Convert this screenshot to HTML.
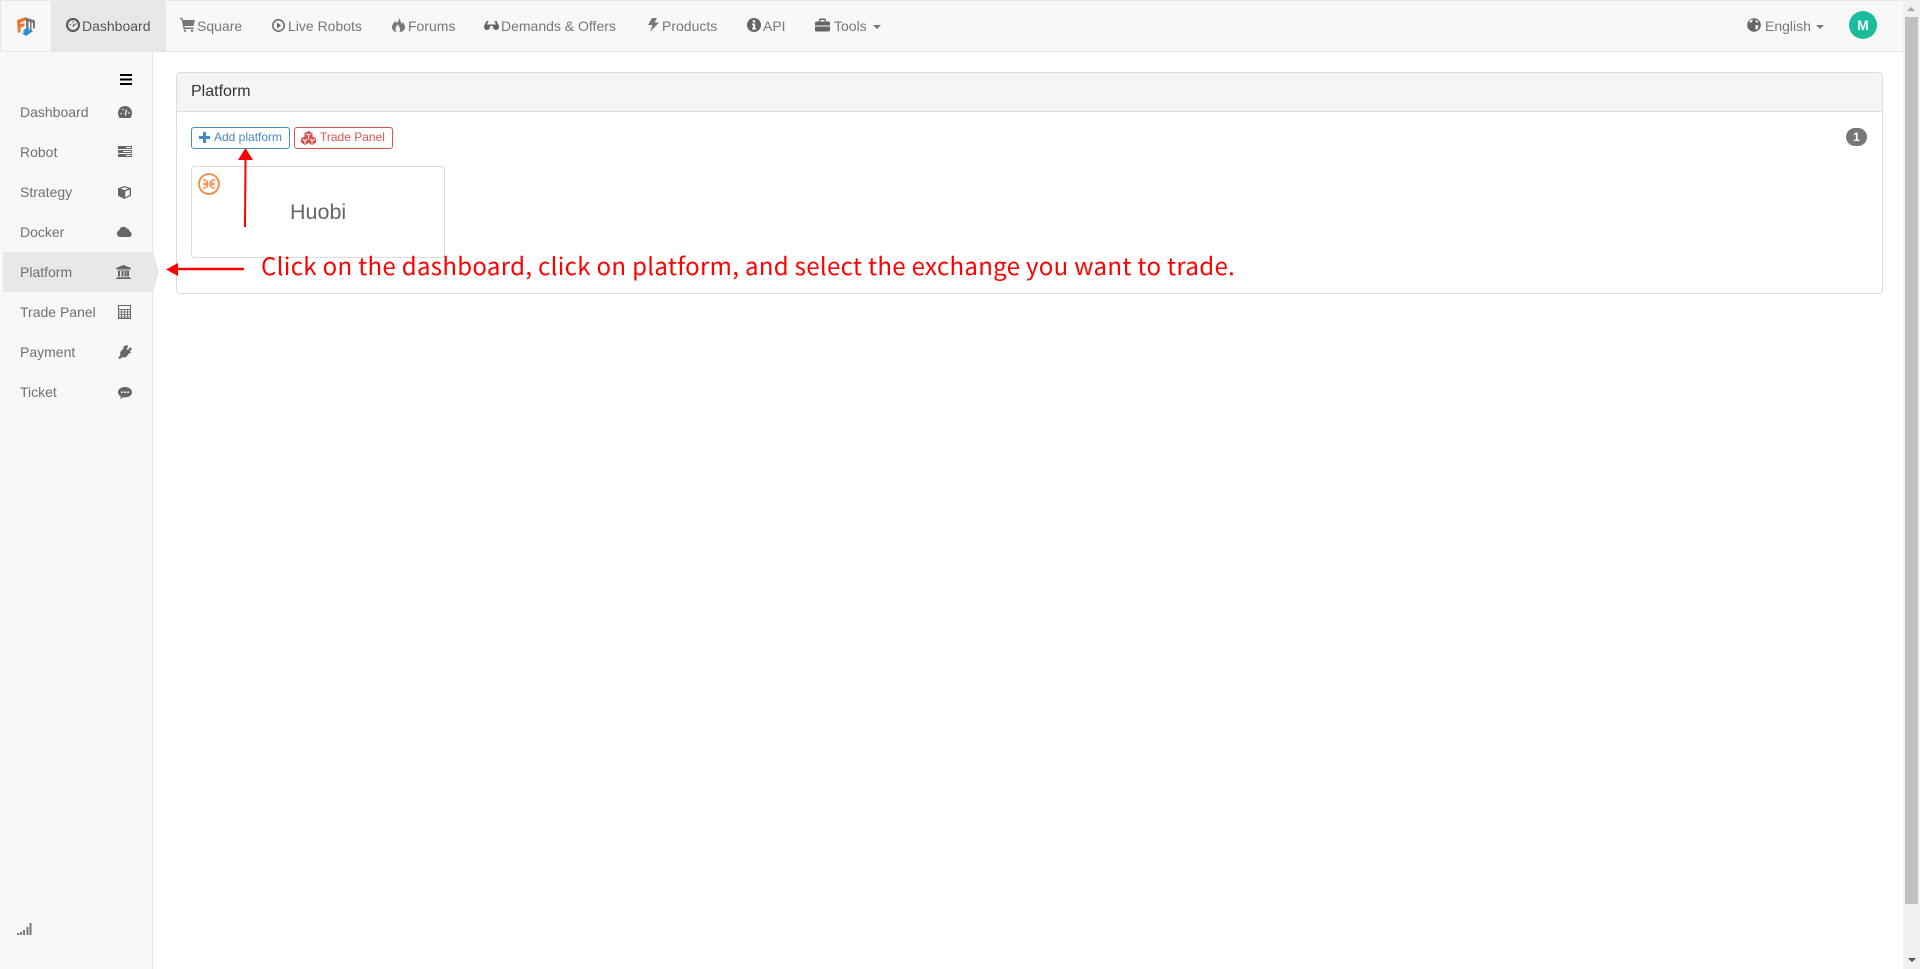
<!DOCTYPE html>
<html><head><meta charset="utf-8"><title>Platform</title>
<style>
html,body{margin:0;padding:0;background:#fff;width:1920px;height:969px;overflow:hidden}
body{position:relative;font-family:"Liberation Sans",Arial,sans-serif;font-size:14px;color:#777}
.a{position:absolute;white-space:nowrap}
.t{position:absolute;white-space:nowrap;line-height:20px}
svg{position:absolute;overflow:visible}
.n{top:16px;color:#777}
.s{left:20px;color:#6f6f6f}
</style></head><body>
<!-- navbar -->
<div class="a" style="left:0;top:0;width:1903px;height:52px;background:#f8f8f8;border-top:1px solid #e7e7e7;border-bottom:1px solid #e7e7e7;box-sizing:border-box"></div>
<div class="a" style="left:0;top:0;width:1px;height:52px;background:#e7e7e7"></div>
<div class="a" style="left:51px;top:1px;width:115px;height:50px;background:#e7e7e7"></div>
<!-- logo -->
<svg style="left:0;top:0" width="52" height="52">
<path d="M17 20l9-3v3.500l-5.500 2v2l4-1.500v3l-4 1.500v4.500L18 33z" fill="#e8782a"/>
<path d="M26 17.500l9 3V28l-2 1v-6l-1.500-.5V30l-1.500 .5V22l-1.500-.5V29l-2.500 1z" fill="#777"/>
<path d="M18.500 31l7.500 5 7-5-2.500-1.500-2 1-1.500-1-5 2 3 0-2.500 2-1.500-1z" fill="#1f8fd0"/>
<path d="M23 30l5-2 2 1-4 2.500z" fill="#1f8fd0"/>
</svg>
<div class="t n" style="left:82px;color:#555">Dashboard</div>
<svg style="left:66px;top:18px" width="14" height="14" viewBox="0 0 14 14"><circle cx="7" cy="7" r="6" fill="none" stroke="#555" stroke-width="2"/><path d="M3.500 6.500h1.200M6.400 3.800h1.200M9.500 6h1.200" stroke="#555" stroke-width="1.300"/><path d="M7 8.500l1.500-2.500" stroke="#555" stroke-width="1.300"/></svg>
<div class="t n" style="left:197px">Square</div>
<svg style="left:180px;top:18px" width="15" height="14" viewBox="0 0 15 14"><path d="M0 0h2.500l.5 2h12l-1.500 6H4.400l.3 1.500h9V11H3.500L1.700 1.400H0z" fill="#777"/><circle cx="5" cy="12.700" r="1.200" fill="#777"/><circle cx="12" cy="12.700" r="1.200" fill="#777"/></svg>
<div class="t n" style="left:288px">Live Robots</div>
<svg style="left:272px;top:19px" width="13" height="13" viewBox="0 0 13 13"><circle cx="6.500" cy="6.500" r="5.700" fill="none" stroke="#666" stroke-width="1.500"/><path d="M5 3.500l4 3-4 3z" fill="#666"/></svg>
<div class="t n" style="left:408px">Forums</div>
<svg style="left:392px;top:18px" width="13" height="14" viewBox="0 0 13 14"><path d="M6.500 0C7.500 3 5.500 4 4.500 5 4 4 3.800 3.500 3.500 3 1.500 5 0 7 0 9.500 0 12 2.500 14 5 14 3.500 13 3 11 4 9c.5-1 1.500-2 2-3 .5 3 3.500 4 1.500 8C10.500 14 13 12 13 9c0-2.500-1.500-3.500-2.500-5-.2 1-.5 1.500-1 2C9 4 8.500 1.500 6.500 0z" fill="#777"/></svg>
<div class="t n" style="left:501px">Demands &amp; Offers</div>
<svg style="left:484px;top:21px" width="15" height="9" viewBox="0 0 15 9"><path d="M0 5l2.500-5h2L3 3.500h9L10.500 0h2L15 5v1a3 3 0 0 1-6 0V5H6v1a3 3 0 0 1-6 0z" fill="#666"/></svg>
<div class="t n" style="left:662px">Products</div>
<svg style="left:648px;top:18px" width="11" height="14" viewBox="0 0 11 14"><path d="M4 0h5L6.500 4.500H11L2 14l2.500-7H0z" fill="#777"/></svg>
<div class="t n" style="left:763px">API</div>
<svg style="left:747px;top:18px" width="14" height="14" viewBox="0 0 14 14"><circle cx="7" cy="7" r="7" fill="#666"/><rect x="5.800" y="2.200" width="2.400" height="2.200" fill="#f8f8f8"/><path d="M5 5.500h3.200V10H9.200v1.500H5V10h1V7H5z" fill="#f8f8f8"/></svg>
<div class="t n" style="left:834px">Tools</div>
<svg style="left:815px;top:18px" width="15" height="14" viewBox="0 0 15 14"><path d="M0 5a1.500 1.500 0 0 1 1.500-1.500H4V2a1.500 1.500 0 0 1 1.500-1.500h4A1.500 1.500 0 0 1 11 2v1.500h2.500A1.500 1.500 0 0 1 15 5v2.500H0zM5.300 2v1.500h4.400V2zM0 8.500h15v3.500a1.500 1.500 0 0 1-1.500 1.500h-12A1.500 1.500 0 0 1 0 12z" fill="#666"/></svg>
<div class="a" style="left:873px;top:25px;border-top:4px solid #777;border-left:4px solid transparent;border-right:4px solid transparent"></div>
<div class="t n" style="left:1765px">English</div>
<svg style="left:1747px;top:18px" width="14" height="14" viewBox="0 0 14 14"><circle cx="7" cy="7" r="6.800" fill="#666"/><path d="M3 2l3-.5L5 4 2.500 5zM8.500 7l3 .5-.5 3-2.500 1.500zM8 2l3 1 0 2-2-1z" fill="#f8f8f8"/></svg>
<div class="a" style="left:1816px;top:25px;border-top:4px solid #777;border-left:4px solid transparent;border-right:4px solid transparent"></div>
<div class="a" style="left:1849px;top:11px;width:28px;height:28px;border-radius:50%;background:#1abc9c;color:#f4fffc;font-weight:bold;font-size:14px;line-height:28px;text-align:center">M</div>
<!-- sidebar -->
<div class="a" style="left:0;top:52px;width:152px;height:917px;background:#f8f8f8;border-right:1px solid #e7e7e7"></div>
<div class="a" style="left:3px;top:252px;width:150px;height:40px;background:#e7e7e7"></div>
<div class="a" style="left:153px;top:252px;border-left:6px solid #e7e7e7;border-top:20px solid transparent;border-bottom:20px solid transparent"></div>
<svg style="left:120px;top:74px" width="12" height="11"><path d="M0 0h12v2H0zM0 4.500h12v2H0zM0 9h12v2H0z" fill="#000"/></svg>
<div class="t s" style="top:102px">Dashboard</div>
<svg style="left:118px;top:106px" width="14" height="12" viewBox="0 0 14 12"><path d="M7 0a7 7 0 0 0-7 7c0 2 .7 3.500 1.500 5h11C13.300 10.500 14 9 14 7a7 7 0 0 0-7-7z" fill="#666"/><path d="M2.500 7.500h1.300M4.500 3.500h1.300M8.500 3.800l-1.200 5.500M10.200 7h1.500" stroke="#f8f8f8" stroke-width="1.300"/></svg>
<div class="t s" style="top:142px">Robot</div>
<svg style="left:118px;top:146px" width="14" height="11" viewBox="0 0 14 11"><path d="M0 0h14v3H0zM0 4h14v3H0zM0 8h14v3H0z" fill="#666"/><path d="M8 1.500h5M5 5.500h8M8 9.500h5" stroke="#f8f8f8" stroke-width="1"/></svg>
<div class="t s" style="top:182px">Strategy</div>
<svg style="left:118px;top:186px" width="13" height="13" viewBox="0 0 13 13"><path d="M6.500 0L13 2.300v7.500L6.500 13 0 9.800V2.300z" fill="#666"/><path d="M6.500 1.300l3.800 1.300-3.800 1.500-3.800-1.500zM7.300 5.300l4.300-1.700v5.400L7.300 11.200z" fill="#f8f8f8"/></svg>
<div class="t s" style="top:222px">Docker</div>
<svg style="left:117px;top:226px" width="15" height="11" viewBox="0 0 15 11"><path d="M3.500 11A3.500 3.500 0 0 1 2.300 4.200 4.200 4.200 0 0 1 9.800 2.500 3 3 0 0 1 12.500 5.500 2.800 2.800 0 0 1 12 11z" fill="#666"/></svg>
<div class="t s" style="top:262px">Platform</div>
<svg style="left:116px;top:265px" width="15" height="14" viewBox="0 0 15 14"><path d="M7.500 0L15 3v1H0V3zM1 4.500h13V5.500H1zM2 6h2v5.500H2zM5.500 6h2v5.500h-2zM8.500 6h2v5.500h-2zM11 6h2v5.500h-2zM1 12h13v.8H1zM0 13h15v1H0z" fill="#666"/></svg>
<div class="t s" style="top:302px">Trade Panel</div>
<svg style="left:118px;top:305px" width="13" height="14" viewBox="0 0 13 14"><path d="M.5.500h12v13H.5z" fill="none" stroke="#666"/><path d="M1 4.500h11M1 7h11M1 9.500h11M1 12h11M3.500 4.500v9M6.500 4.500v9M9.500 4.500v9" stroke="#777" stroke-width="1"/></svg>
<div class="t s" style="top:342px">Payment</div>
<svg style="left:118px;top:345px" width="14" height="14" viewBox="0 0 14 14"><path d="M8.500 0l1.800 1.200L8.500 4l1.500 1L12 2.300 14 3.500l-2 3 1 .7-1 1.300-.8-.5L9 11c-1.500 1.800-3.200 1.800-4.500 1L2 14 0 13l2.500-3C1.800 8.500 2 7 3.500 5.500L6 3 5 2z" fill="#666"/></svg>
<div class="t s" style="top:382px">Ticket</div>
<svg style="left:118px;top:387px" width="14" height="12" viewBox="0 0 14 12"><ellipse cx="7" cy="5.200" rx="7" ry="5.200" fill="#666"/><path d="M3 9l-1 3 4-2z" fill="#666"/><circle cx="4" cy="5.200" r="1" fill="#f8f8f8"/><circle cx="7" cy="5.200" r="1" fill="#f8f8f8"/><circle cx="10" cy="5.200" r="1" fill="#f8f8f8"/></svg>
<svg style="left:17px;top:923px" width="15" height="12"><path d="M0 10h2v2H0zM3 9h2v3H3zM6 7h2v5H6zM9.500 4h2v8h-2zM12.500 0h2v12h-2z" fill="#777"/></svg>
<!-- panel -->
<div class="a" style="left:176px;top:72px;width:1707px;height:222px;box-sizing:border-box;border:1px solid #ddd;border-radius:4px;background:#fff"></div>
<div class="a" style="left:177px;top:73px;width:1705px;height:38px;background:#f5f5f5;border-bottom:1px solid #ddd;border-radius:3px 3px 0 0"></div>
<div class="t" style="left:191px;top:82px;font-size:16px;color:#333">Platform</div>
<div class="a" style="left:191px;top:127px;width:99px;height:22px;box-sizing:border-box;border:1px solid #4a8bc4;border-radius:3px;background:#fff"></div>
<svg style="left:199px;top:132px" width="11" height="11"><path d="M4 0h3v4h4v3H7v4H4V7H0V4h4z" fill="#428bca"/></svg>
<div class="t" style="left:214px;top:127px;font-size:12px;color:#4a86c0">Add platform</div>
<div class="a" style="left:294px;top:127px;width:99px;height:22px;box-sizing:border-box;border:1px solid #d9534f;border-radius:3px;background:#fff"></div>
<svg style="left:301px;top:131px" width="15" height="14" viewBox="0 0 15 14"><path d="M7.500 0l4 2v3.500l3.500 2v4L11 14 7.500 12 4 14 0 11.500v-4l3.500-2V2z" fill="#d9534f"/><path d="M5 2.800l2.500 1.200L10 2.800M7.500 4.500V8M1.500 8.300L4 9.500l2.500-1.200M9 8.300l2.500 1.200L14 8.300M4 9.500v3M11 9.500v3" stroke="#fff" stroke-width="1" fill="none"/></svg>
<div class="t" style="left:320px;top:127px;font-size:12px;color:#d9534f">Trade Panel</div>
<div class="a" style="left:1846px;top:128px;width:21px;height:18px;border-radius:9px;background:#777;color:#fff;font-weight:bold;font-size:12px;line-height:18px;text-align:center">1</div>
<!-- card -->
<div class="a" style="left:191px;top:166px;width:254px;height:92px;box-sizing:border-box;border:1px solid #ddd;border-radius:4px;background:#fff"></div>
<svg style="left:198px;top:173px" width="22" height="22" viewBox="0 0 22 22"><circle cx="11" cy="11" r="10" fill="none" stroke="#f5873c" stroke-width="1.800"/><path d="M5 6.800C8 7 9.800 8.300 9.800 10.200H5.500M5 15.200C8 15 9.800 13.700 9.800 11.800H5.500M17 6.800C14 7 12.200 8.300 12.200 10.200H16.500M17 15.200C14 15 12.200 13.700 12.200 11.800H16.500" fill="none" stroke="#f5873c" stroke-width="1.300"/></svg>
<div class="t" style="left:290px;top:200px;font-size:21.5px;line-height:24px;color:#666">Huobi</div>
<!-- annotations -->
<svg style="left:0;top:0" width="1920" height="969"><path d="M245 227L245.500 160" stroke="#f00" stroke-width="2" fill="none"/><path d="M245.500 148l7.500 12h-15z" fill="#f00"/><path d="M244 269H178" stroke="#f00" stroke-width="2.400" fill="none"/><path d="M166 269.500l12-6.500v13z" fill="#f00"/></svg>
<div class="a" style="left:261px;top:247px;font-family:'Noto Sans CJK SC','Liberation Sans',sans-serif;font-size:24px;line-height:35px;color:#f00;letter-spacing:.33px">Click on the dashboard, click on platform, and select the exchange you want to trade.</div>
<!-- scrollbar -->
<div class="a" style="left:1903px;top:0;width:17px;height:969px;background:#f0f0f0"></div>
<div class="a" style="left:1905px;top:17px;width:13px;height:887px;background:#c0c0c0"></div>
<div class="a" style="left:1907px;top:7px;border-bottom:4px solid #a3a3a3;border-left:4px solid transparent;border-right:4px solid transparent"></div>
<div class="a" style="left:1908px;top:958px;border-top:4px solid #505050;border-left:4px solid transparent;border-right:4px solid transparent"></div>
</body></html>
